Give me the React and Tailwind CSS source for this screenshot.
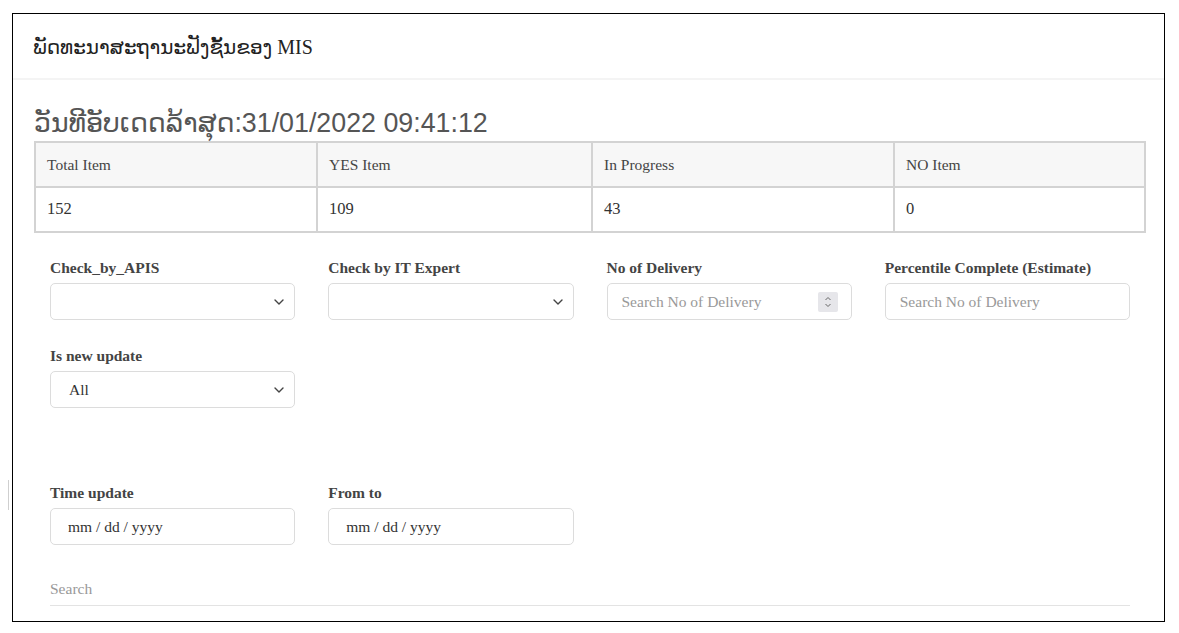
import React from "react";

const serif = { fontFamily: '"Liberation Serif", "DejaVu Sans", serif' };

const columns = [
  { label: "Total Item", value: "152", w: "w-[282px]" },
  { label: "YES Item", value: "109", w: "w-[275px]" },
  { label: "In Progress", value: "43", w: "w-[302px]" },
  { label: "NO Item", value: "0", w: "flex-1" },
];

const Chevron = () => (
  <svg
    className="pointer-events-none absolute right-[11px] top-1/2 -translate-y-1/2"
    width="10"
    height="6"
    viewBox="0 0 10 6"
    fill="none"
  >
    <path d="M1 1l4 4 4-4" stroke="#444" strokeWidth="1.4" strokeLinecap="round" strokeLinejoin="round" />
  </svg>
);

const Field = ({ label, children }) => (
  <div className="flex flex-col">
    <label className="text-[15.5px] font-bold text-[#444] leading-[18px] mb-[6px]">{label}</label>
    {children}
  </div>
);

const SelectBox = ({ value = "" }) => (
  <div className="relative h-[37px]">
    <div className="h-full w-full rounded-[5px] border border-[#dcdcdc] bg-white pl-[18px] flex items-center text-[15.5px] text-[#333]">
      {value}
    </div>
    <Chevron />
  </div>
);

const TextBox = ({ placeholder, spinner, dark }) => (
  <div className="relative h-[37px]">
    <input
      readOnly
      placeholder={placeholder}
      className={`h-full w-full rounded-[5px] border border-[#dcdcdc] bg-white text-[15.5px] outline-none ${
        dark ? "placeholder:text-[#333] pl-[17px]" : "placeholder:text-[#999] pl-[14px]"
      }`}
      style={serif}
    />
    {spinner && (
      <span className="pointer-events-none absolute right-[14px] top-1/2 -translate-y-1/2 flex h-[20px] w-[20px] flex-col items-center justify-center rounded-[2px] bg-[#e6e6ea]">
        <svg width="8" height="14" viewBox="0 0 8 14" fill="none">
          <path d="M1.5 5L4 2.5 6.5 5" stroke="#666" strokeWidth="1" />
          <path d="M1.5 9L4 11.5 6.5 9" stroke="#666" strokeWidth="1" />
        </svg>
      </span>
    )}
  </div>
);

export default function App() {
  return (
    <div className="min-h-screen bg-white pl-[12px] pt-[13px] relative" style={serif}>
      <div className="absolute left-[8px] top-[480px] h-[30px] w-px bg-[#cfcfcf]" />
      <div className="w-[1153px] h-[609px] border border-black bg-white overflow-hidden">
        {/* header */}
        <div className="h-[66px] border-b-2 border-[#f4f4f4] pl-[20px] flex items-center">
          <h1 className="text-[20px] text-[#222] leading-none pt-[2px]">ພັດທະນາສະຖານະຟັງຊັ້ນຂອງ MIS</h1>
        </div>

        <div className="pl-[21px] pr-[18px]">
          {/* last update */}
          <div
            className="h-[61px] flex items-end pb-[4px] text-[26.8px] text-[#555] leading-none"
            style={{ fontFamily: '"Liberation Sans", "DejaVu Sans", sans-serif' }}
          >
            ວັນທີອັບເດດລ້າສຸດ:31/01/2022 09:41:12
          </div>

          {/* summary table */}
          <div className="border-2 border-[#d3d3d3] text-[15.5px] text-[#444]">
            <div className="flex h-[45px] bg-[#f7f7f7] border-b-2 border-[#d3d3d3]">
              {columns.map((c, i) => (
                <div
                  key={c.label}
                  className={`${c.w} flex items-center pl-[11px] ${i < 3 ? "border-r-2 border-[#d3d3d3]" : ""}`}
                >
                  {c.label}
                </div>
              ))}
            </div>
            <div className="flex h-[43px] bg-white text-[16.5px] text-[#333]">
              {columns.map((c, i) => (
                <div
                  key={c.label}
                  className={`${c.w} flex items-center pl-[11px] ${i < 3 ? "border-r-2 border-[#d3d3d3]" : ""}`}
                >
                  {c.value}
                </div>
              ))}
            </div>
          </div>

          {/* filters */}
          <div className="px-[16px] pt-[26px]">
            <div className="grid grid-cols-4 gap-x-[33px] gap-y-[27px]">
              <Field label="Check_by_APIS">
                <SelectBox />
              </Field>
              <Field label="Check by IT Expert">
                <SelectBox />
              </Field>
              <Field label="No of Delivery">
                <TextBox placeholder="Search No of Delivery" spinner />
              </Field>
              <Field label="Percentile Complete (Estimate)">
                <TextBox placeholder="Search No of Delivery" />
              </Field>
              <Field label="Is new update">
                <SelectBox value="All" />
              </Field>
            </div>

            <div className="grid grid-cols-4 gap-x-[33px] mt-[76px]">
              <Field label="Time update">
                <TextBox placeholder="mm / dd / yyyy" dark />
              </Field>
              <Field label="From to">
                <TextBox placeholder="mm / dd / yyyy" dark />
              </Field>
            </div>

            <div className="mt-[32px] h-[29px] border-b border-[#e3e3e3] flex items-start text-[15.5px] text-[#999]">
              Search
            </div>
          </div>
        </div>
      </div>
    </div>
  );
}
